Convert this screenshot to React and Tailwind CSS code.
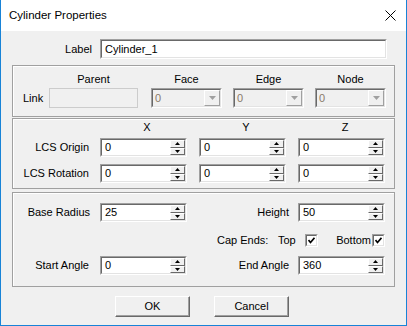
function SpinBtn({ up }) {
  return (
    <div className="flex-1 flex items-center justify-center bg-[#f0f0f0] border border-t-white border-l-white border-b-[#696969] border-r-[#696969]">
      <svg width="5" height="3" viewBox="0 0 5 3">
        <polygon points={up ? "2.5,0 5,3 0,3" : "0,0 5,0 2.5,3"} fill="#000" />
      </svg>
    </div>
  );
}

function Spin({ value }) {
  return (
    <div className="w-[87px] h-[19px] flex border border-t-[#a0a0a0] border-l-[#a0a0a0] border-b-white border-r-white">
      <div className="flex-1 flex bg-white border border-t-[#696969] border-l-[#696969] border-b-[#e3e3e3] border-r-[#e3e3e3]">
        <div className="flex-1 pl-[3px] leading-[15px]">{value}</div>
        <div className="w-[15px] flex flex-col">
          <SpinBtn up />
          <SpinBtn />
        </div>
      </div>
    </div>
  );
}

function Combo() {
  return (
    <div className="w-[71px] h-[20px] flex border border-t-[#a0a0a0] border-l-[#a0a0a0] border-b-white border-r-white">
      <div className="flex-1 flex items-center bg-[#f0f0f0] border border-t-[#696969] border-l-[#696969] border-b-[#e3e3e3] border-r-[#e3e3e3]">
        <div className="flex-1 pl-[2px] text-[#8a7a6a]">0</div>
        <div className="w-[16px] h-full flex items-center justify-center border border-t-white border-l-white border-b-[#a0a0a0] border-r-[#a0a0a0]">
          <svg width="7" height="4" viewBox="0 0 7 4">
            <polygon points="0,0 7,0 3.5,4" fill="#a0a0a0" />
          </svg>
        </div>
      </div>
    </div>
  );
}

function Check() {
  return (
    <div className="w-[13px] h-[13px] flex border border-t-[#a0a0a0] border-l-[#a0a0a0] border-b-white border-r-white">
      <div className="flex-1 flex items-center justify-center bg-white border border-t-[#696969] border-l-[#696969] border-b-[#e3e3e3] border-r-[#e3e3e3]">
        <svg width="7" height="7" viewBox="0 0 7 7">
          <path d="M0.5 3 L2.5 5.5 L6.5 0.8" stroke="#000" strokeWidth="1.7" fill="none" />
        </svg>
      </div>
    </div>
  );
}

function Btn({ children }) {
  return (
    <div className="w-[75px] h-[21px] flex items-center justify-center bg-[#f0f0f0] border border-t-white border-l-white border-b-[#696969] border-r-[#696969] shadow-[inset_-1px_-1px_0_#a0a0a0]">
      {children}
    </div>
  );
}

function Group({ className, children }) {
  return (
    <div className={"w-[383px] border border-[#a0a0a0] shadow-[inset_1px_1px_0_#ffffff] " + className}>
      {children}
    </div>
  );
}

export default function App() {
  return (
    <div className="w-[407px] h-[326px] flex flex-col bg-[#f0f0f0] border-x border-b border-[#1883d7] text-[11px] text-black font-['Liberation_Sans',Arial,sans-serif]">
      <div className="h-[31px] bg-white flex items-center justify-between pl-[8px] pr-[10px]">
        <span className="text-[11.5px]">Cylinder Properties</span>
        <svg width="11" height="11" viewBox="0 0 11 11">
          <path d="M0.5 0.5 L10.5 10.5 M10.5 0.5 L0.5 10.5" stroke="#000" strokeWidth="1" />
        </svg>
      </div>

      <div className="flex flex-col px-[11px]">
        <div className="flex items-center pt-[8px]">
          <div className="w-[88px] pr-[8px] text-right">Label</div>
          <div className="w-[287px] h-[20px] flex border border-t-[#a0a0a0] border-l-[#a0a0a0] border-b-white border-r-white">
            <div className="flex-1 flex items-center pl-[3px] bg-white border border-t-[#696969] border-l-[#696969] border-b-[#e3e3e3] border-r-[#e3e3e3]">
              Cylinder_1
            </div>
          </div>
        </div>

        <Group className="mt-[6px] pt-[6px] pb-[8px]">
          <div className="flex h-[15px] items-center">
            <div className="w-[36px]" />
            <div className="w-[89px] text-center">Parent</div>
            <div className="w-[13px]" />
            <div className="w-[71px] text-center">Face</div>
            <div className="w-[11px]" />
            <div className="w-[71px] text-center">Edge</div>
            <div className="w-[11px]" />
            <div className="w-[71px] text-center">Node</div>
          </div>
          <div className="flex mt-[1px] items-center">
            <div className="w-[36px] pl-[10px]">Link</div>
            <div className="w-[89px] h-[20px] border border-[#cccccc] bg-[#f0f0f0]" />
            <div className="w-[13px]" />
            <Combo />
            <div className="w-[11px]" />
            <Combo />
            <div className="w-[11px]" />
            <Combo />
          </div>
        </Group>

        <Group className="mt-[1px] pt-[1px] pb-[5px]">
          <div className="flex h-[15px] items-center">
            <div className="w-[87px]" />
            <div className="w-[87px] pl-[7px] text-center">X</div>
            <div className="w-[12px]" />
            <div className="w-[87px] pl-[7px] text-center">Y</div>
            <div className="w-[12px]" />
            <div className="w-[87px] pl-[7px] text-center">Z</div>
          </div>
          <div className="flex mt-[3px] items-center">
            <div className="w-[87px] pr-[11px] text-right">LCS Origin</div>
            <Spin value="0" />
            <div className="w-[12px]" />
            <Spin value="0" />
            <div className="w-[12px]" />
            <Spin value="0" />
          </div>
          <div className="flex mt-[7px] items-center">
            <div className="w-[87px] pr-[11px] text-right">LCS Rotation</div>
            <Spin value="0" />
            <div className="w-[12px]" />
            <Spin value="0" />
            <div className="w-[12px]" />
            <Spin value="0" />
          </div>
        </Group>

        <Group className="mt-[3px] pt-[10px] pb-[11px]">
          <div className="flex items-center">
            <div className="w-[87px] pr-[10px] text-right">Base Radius</div>
            <Spin value="25" />
            <div className="w-[111px] pr-[9px] text-right">Height</div>
            <Spin value="50" />
          </div>
          <div className="flex mt-[12px] items-center h-[13px]">
            <div className="w-[204px]" />
            <div className="w-[61px]">Cap Ends:</div>
            <div className="w-[27px]">Top</div>
            <Check />
            <div className="w-[54px] pr-[1px] text-right">Bottom</div>
            <Check />
          </div>
          <div className="flex mt-[9px] items-center">
            <div className="w-[87px] pr-[11px] text-right">Start Angle</div>
            <Spin value="0" />
            <div className="w-[111px] pr-[9px] text-right">End Angle</div>
            <Spin value="360" />
          </div>
        </Group>

        <div className="flex justify-center gap-[24px] mt-[9px] pr-[3px]">
          <Btn>OK</Btn>
          <Btn>Cancel</Btn>
        </div>
      </div>
    </div>
  );
}
